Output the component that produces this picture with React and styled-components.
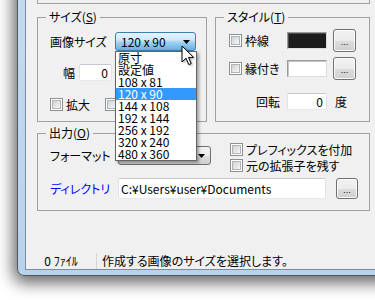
import React from "react";
import styled, { createGlobalStyle } from "styled-components";

const GlobalStyle = createGlobalStyle`
  html, body {
    margin: 0;
    padding: 0;
    background: #ffffff;
    overflow: hidden;
  }
  body {
    width: 375px;
    height: 300px;
    font-family: "Noto Sans CJK JP", sans-serif;
    font-size: 12px;
    font-feature-settings: "palt" 1;
    color: #000;
  }
`;

const Window = styled.div`
  margin: -30px 0 0 17px;
  width: 400px;
  padding: 0 0 5px 7px;
  background: linear-gradient(to bottom, #c4daf0, #b9d2ec);
  border: 1px solid #4c5866;
  border-top: none;
  border-bottom-left-radius: 7px;
  box-shadow: 0 3px 16px 4px rgba(0, 0, 0, 0.6);
`;

const Client = styled.div`
  height: 299px;
  background: #f0f0f0;
  border-left: 1px solid #7d8c9c;
  border-bottom: 1px solid #7d8c9c;
  display: flex;
  flex-direction: column;
`;

const Panels = styled.div`
  width: 333px;
  margin-left: 11px;
  display: flex;
  flex-direction: column;
`;

const TopGroup = styled.div`
  height: 34px;
  box-sizing: border-box;
  border: 1px solid #a0a0a0;
  border-top: none;
`;

const GroupRow = styled.div`
  display: flex;
  gap: 8px;
  margin-top: 6px;
`;

const Group = styled.fieldset`
  margin: ${(p) => p.$mt || 0}px 0 0 0;
  padding: 0;
  min-width: 0;
  box-sizing: border-box;
  width: ${(p) => (p.$w ? `${p.$w}px` : "auto")};
  flex: ${(p) => (p.$w ? "none" : "1")};
  border: 1px solid #a0a0a0;
`;

const Legend = styled.legend`
  margin-left: 8px;
  padding: 0 3px;
  height: 14px;
  line-height: 14px;
`;

const GroupBody = styled.div`
  display: flex;
  flex-direction: column;
  padding: ${(p) => p.$pad};
  position: relative;
`;

const Row = styled.div`
  display: flex;
  align-items: ${(p) => (p.$top ? "flex-start" : "center")};
  height: ${(p) => p.$h}px;
  margin-top: ${(p) => p.$mt || 0}px;
`;

const FieldLabel = styled.span`
  flex: none;
  width: ${(p) => p.$w}px;
  text-align: ${(p) => (p.$right ? "right" : "left")};
  color: ${(p) => p.$color || "#000"};
  white-space: nowrap;
  line-height: 14px;
`;

const Unit = styled.span`
  margin-left: 8px;
  line-height: 14px;
`;

const TextBox = styled.div`
  flex: none;
  box-sizing: border-box;
  width: ${(p) => p.$w}px;
  height: ${(p) => p.$h || 17}px;
  margin-left: ${(p) => p.$ml || 0}px;
  padding: 0 ${(p) => (p.$right ? 3 : 1)}px 0 2px;
  background: #fff;
  border: 1px solid;
  border-color: #c5c8cf #dfe3e9 #e3e9ef #dfe3e9;
  border-radius: 2px;
  display: flex;
  align-items: center;
  justify-content: ${(p) => (p.$right ? "flex-end" : "flex-start")};
  line-height: 14px;
  white-space: nowrap;
  overflow: hidden;
`;

const ColorBox = styled.div`
  flex: none;
  box-sizing: border-box;
  width: 40px;
  height: 17px;
  background: ${(p) => p.$color};
  border: 1px solid;
  border-color: #9a9a9a #dcdcdc #dcdcdc #9a9a9a;
  box-shadow: inset 1px 1px 0 ${(p) => (p.$color === "#fff" ? "#c4c4c4" : "#4a4a4a")};
`;

const DotsButton = styled.div`
  flex: none;
  box-sizing: border-box;
  width: ${(p) => p.$w}px;
  height: ${(p) => p.$h}px;
  margin-left: ${(p) => p.$ml || 0}px;
  border: 1px solid #707070;
  border-radius: 3px;
  background: linear-gradient(#f2f2f2 0%, #ebebeb 50%, #dddddd 51%, #cfcfcf 100%);
  box-shadow: inset 0 0 0 1px #fbfbfb;
  display: flex;
  align-items: center;
  justify-content: center;
  font-family: "Liberation Sans", sans-serif;
  font-size: 9px;
  padding-top: 2px;
`;

const CheckItem = styled.label`
  flex: none;
  display: flex;
  align-items: center;
  gap: 3px;
  width: ${(p) => (p.$w ? `${p.$w}px` : "auto")};
  height: 13px;
  line-height: 14px;
  white-space: nowrap;
`;

const CheckBox = styled.span`
  flex: none;
  box-sizing: border-box;
  width: 13px;
  height: 13px;
  border: 1px solid #8e8f8f;
  background: #fff;
  padding: 1px;
  display: flex;

  &::after {
    content: "";
    flex: 1;
    border: 1px solid #b0b3b7;
    background: linear-gradient(135deg, #cfd1d4, #f7f7f7);
  }
`;

const CheckColumn = styled.div`
  display: flex;
  flex-direction: column;
  gap: 3px;
  margin-left: 19px;
`;

const ComboWrap = styled.div`
  position: relative;
  flex: none;
`;

const Combo = styled.div`
  box-sizing: border-box;
  width: ${(p) => p.$w}px;
  height: 19px;
  padding: 0 5px 0 5px;
  display: flex;
  align-items: center;
  justify-content: ${(p) => (p.$hot ? "space-between" : "flex-end")};
  border: 1px solid ${(p) => (p.$hot ? "#3c7fb1" : "#707070")};
  border-radius: 3px;
  background: ${(p) =>
    p.$hot
      ? "linear-gradient(#e6f4fd 0%, #cde9fa 40%, #9fd2f3 55%, #68aee0 100%)"
      : "linear-gradient(#f2f2f2 0%, #ebebeb 50%, #dddddd 51%, #cfcfcf 100%)"};
  line-height: 14px;
`;

const Arrow = () => (
  <svg width="7" height="4" viewBox="0 0 7 4">
    <polygon points="0,0 7,0 3.5,4" fill="#000" />
  </svg>
);

const DropList = styled.ul`
  position: absolute;
  top: 100%;
  left: 0;
  z-index: 2;
  margin: 0;
  padding: 0;
  list-style: none;
  width: 82px;
  box-sizing: border-box;
  background: #fff;
  border: 1px solid #646464;
  box-shadow: 2px 2px 3px rgba(0, 0, 0, 0.35);
`;

const DropItem = styled.li`
  height: 12px;
  line-height: 12px;
  padding-left: 2px;
  background: ${(p) => (p.$active ? "#3399ff" : "transparent")};
  color: ${(p) => (p.$active ? "#fff" : "#000")};
  white-space: nowrap;
`;

const Pointer = styled.svg`
  position: absolute;
  left: 66px;
  top: 13px;
  z-index: 3;
  filter: drop-shadow(1px 1px 1px rgba(0, 0, 0, 0.35));
`;

const StatusBar = styled.div`
  margin-top: auto;
  height: 16px;
  display: flex;
  align-items: center;
`;

const StatusPanel = styled.div`
  width: 70px;
  height: 100%;
  display: flex;
  align-items: center;
  justify-content: center;
  border-right: 1px solid #d5d5d5;
  line-height: 14px;
`;

const StatusText = styled.div`
  padding-left: 5px;
  line-height: 14px;
  white-space: nowrap;
`;

const sizes = ["原寸", "設定値", "108 x 81", "120 x 90", "144 x 108", "192 x 144", "256 x 192", "320 x 240", "480 x 360"];

const App = () => {
  return (
    <>
      <GlobalStyle />
      <Window>
        <Client>
          <Panels>
            <TopGroup />
            <GroupRow>
              <Group $w={170}>
                <Legend>
                  サイズ(<u>S</u>)
                </Legend>
                <GroupBody $pad="8px 0 10px 12px">
                  <Row $h={19}>
                    <FieldLabel $w={65}>画像サイズ</FieldLabel>
                    <ComboWrap>
                      <Combo $hot $w={81}>
                        <span>120 x 90</span>
                        <Arrow />
                      </Combo>
                      <DropList>
                        {sizes.map((s) => (
                          <DropItem key={s} $active={s === "120 x 90"}>
                            {s}
                          </DropItem>
                        ))}
                      </DropList>
                      <Pointer width="14" height="21" viewBox="0 0 14 21">
                        <path
                          d="M1 1 V17 L5 13.2 L7.8 19.6 L10.2 18.6 L7.5 12.4 H12.6 Z"
                          fill="#fff"
                          stroke="#000"
                          strokeWidth="1"
                          strokeLinejoin="round"
                        />
                      </Pointer>
                    </ComboWrap>
                  </Row>
                  <Row $h={17} $mt={13}>
                    <FieldLabel $w={25} $right>
                      幅
                    </FieldLabel>
                    <TextBox $w={33} $ml={4} $right>
                      0
                    </TextBox>
                  </Row>
                  <Row $h={13} $mt={17}>
                    <CheckItem $w={55}>
                      <CheckBox />
                      拡大
                    </CheckItem>
                    <CheckBox />
                  </Row>
                </GroupBody>
              </Group>
              <Group>
                <Legend>
                  スタイル(<u>T</u>)
                </Legend>
                <GroupBody $pad="5px 0 11px 13px">
                  <Row $h={23}>
                    <CheckItem $w={58}>
                      <CheckBox />
                      枠線
                    </CheckItem>
                    <ColorBox $color="#1c1c1c" />
                    <DotsButton $w={23} $h={23} $ml={6}>
                      ...
                    </DotsButton>
                  </Row>
                  <Row $h={23} $mt={5}>
                    <CheckItem $w={58}>
                      <CheckBox />
                      縁付き
                    </CheckItem>
                    <ColorBox $color="#fff" />
                    <DotsButton $w={23} $h={23} $ml={6}>
                      ...
                    </DotsButton>
                  </Row>
                  <Row $h={17} $mt={13}>
                    <FieldLabel $w={51} $right>
                      回転
                    </FieldLabel>
                    <TextBox $w={40} $ml={7} $right>
                      0
                    </TextBox>
                    <Unit>度</Unit>
                  </Row>
                </GroupBody>
              </Group>
            </GroupRow>
            <Group $mt={4}>
              <Legend>
                出力(<u>O</u>)
              </Legend>
              <GroupBody $pad="3px 0 11px 12px">
                <Row $h={29} $top>
                  <Row $h={19} $mt={3}>
                    <FieldLabel $w={68}>フォーマット</FieldLabel>
                    <Combo $w={93}>
                      <Arrow />
                    </Combo>
                  </Row>
                  <CheckColumn>
                    <CheckItem>
                      <CheckBox />
                      プレフィックスを付加
                    </CheckItem>
                    <CheckItem>
                      <CheckBox />
                      元の拡張子を残す
                    </CheckItem>
                  </CheckColumn>
                </Row>
                <Row $h={21} $mt={6}>
                  <FieldLabel $w={68} $color="#0000ff">
                    ディレクトリ
                  </FieldLabel>
                  <TextBox $w={208} $h={21}>
                    C:¥Users¥user¥Documents
                  </TextBox>
                  <DotsButton $w={22} $h={21} $ml={10}>
                    ...
                  </DotsButton>
                </Row>
              </GroupBody>
            </Group>
          </Panels>
          <StatusBar>
            <StatusPanel>0 ﾌｧｲﾙ</StatusPanel>
            <StatusText>作成する画像のサイズを選択します。</StatusText>
          </StatusBar>
        </Client>
      </Window>
    </>
  );
};

export default App;
